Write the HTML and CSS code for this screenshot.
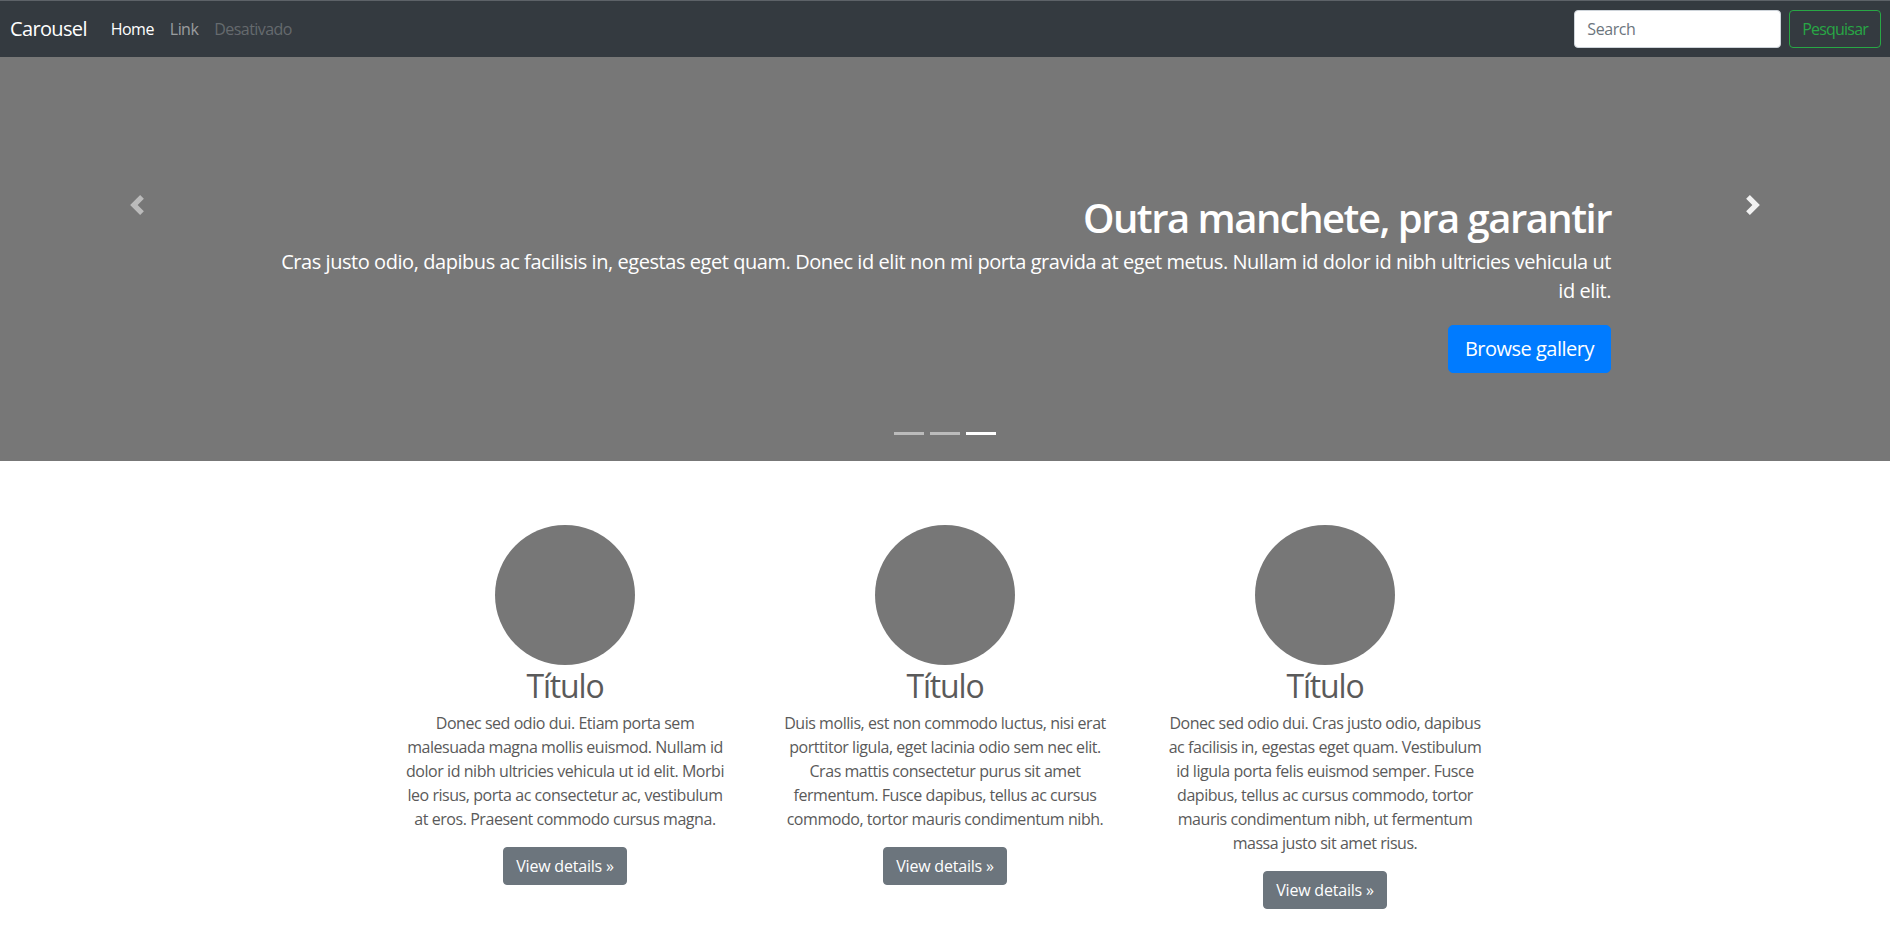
FILE: index.html
```html
<!DOCTYPE html>
<html lang="pt-BR">
<head>
<meta charset="utf-8">
<title>Carousel</title>
<link rel="stylesheet" href="styles.css">
</head>
<body>
<header class="navbar">
  <a class="brand" href="#">Carousel</a>
  <ul class="nav">
    <li class="active"><a href="#">Home</a></li>
    <li><a href="#">Link</a></li>
    <li class="disabled"><a href="#">Desativado</a></li>
  </ul>
  <form class="search">
    <input type="text" placeholder="Search">
    <button type="button" class="btn-outline">Pesquisar</button>
  </form>
</header>

<section class="carousel">
  <a class="control prev" href="#">
    <svg width="20" height="20" viewBox="0 0 8 8" fill="#fff"><path d="M5.25 0l-4 4 4 4 1.5-1.5L4.25 4l2.5-2.5L5.25 0z"/></svg>
  </a>
  <div class="caption">
    <h1>Outra manchete, pra garantir</h1>
    <p>Cras justo odio, dapibus ac facilisis in, egestas eget quam. Donec id elit non mi porta gravida at eget metus. Nullam id dolor id nibh ultricies vehicula ut id elit.</p>
    <div class="actions"><a class="btn-lg" href="#">Browse gallery</a></div>
  </div>
  <a class="control next" href="#">
    <svg width="20" height="20" viewBox="0 0 8 8" fill="#fff"><path d="M2.75 0l-1.5 1.5L3.75 4l-2.5 2.5L2.75 8l4-4-4-4z"/></svg>
  </a>
  <ol class="indicators">
    <li></li>
    <li></li>
    <li class="active"></li>
  </ol>
</section>

<main class="marketing">
  <div class="feature">
    <div class="circle"></div>
    <h2>Título</h2>
    <p>Donec sed odio dui. Etiam porta sem malesuada magna mollis euismod. Nullam id dolor id nibh ultricies vehicula ut id elit. Morbi leo risus, porta ac consectetur ac, vestibulum at eros. Praesent commodo cursus magna.</p>
    <a class="btn-secondary" href="#">View details »</a>
  </div>
  <div class="feature">
    <div class="circle"></div>
    <h2>Título</h2>
    <p>Duis mollis, est non commodo luctus, nisi erat porttitor ligula, eget lacinia odio sem nec elit. Cras mattis consectetur purus sit amet fermentum. Fusce dapibus, tellus ac cursus commodo, tortor mauris condimentum nibh.</p>
    <a class="btn-secondary" href="#">View details »</a>
  </div>
  <div class="feature">
    <div class="circle"></div>
    <h2>Título</h2>
    <p>Donec sed odio dui. Cras justo odio, dapibus ac facilisis in, egestas eget quam. Vestibulum id ligula porta felis euismod semper. Fusce dapibus, tellus ac cursus commodo, tortor mauris condimentum nibh, ut fermentum massa justo sit amet risus.</p>
    <a class="btn-secondary" href="#">View details »</a>
  </div>
</main>
</body>
</html>
```

FILE: styles.css
```css
* { box-sizing: border-box; }

body {
  margin: 0;
  font-family: "Open Sans", "Noto Sans", sans-serif;
  color: #5a5a5a;
  background: #fff;
}

a { text-decoration: none; }

/* navbar */
.navbar {
  display: flex;
  align-items: center;
  height: 57px;
  border-top: 1px solid #5d6268;
  background: #343a40;
  padding: 0 9px 0 10px;
}
.brand {
  font-size: 20px;
  line-height: 30px;
  letter-spacing: -0.65px;
  color: #fff;
  margin-right: 16px;
}
.nav {
  display: flex;
  flex: 1;
  list-style: none;
  margin: 0;
  padding: 0;
}
.nav a {
  display: block;
  padding: 8px;
  font-size: 16px;
  line-height: 24px;
  letter-spacing: -0.55px;
  color: rgba(255, 255, 255, .5);
}
.nav .active a { color: #fff; }
.nav .disabled a { color: rgba(255, 255, 255, .25); }

.search {
  display: flex;
  gap: 8px;
  margin: 0;
}
.search input {
  width: 207px;
  height: 38px;
  padding: 6px 12px;
  font-family: inherit;
  font-size: 16px;
  letter-spacing: -0.4px;
  color: #495057;
  background: #fff;
  border: 1px solid #ced4da;
  border-radius: 4px;
}
.search input::placeholder { color: #6c757d; }
.btn-outline {
  height: 38px;
  padding: 6px 12px;
  font-family: inherit;
  font-size: 16px;
  line-height: 24px;
  letter-spacing: -0.8px;
  color: #28a745;
  background: transparent;
  border: 1px solid #28a745;
  border-radius: 4px;
}

/* carousel */
.carousel {
  position: relative;
  height: 404px;
  background: #777;
}
.control {
  position: absolute;
  top: 0;
  width: 274px;
  height: 295px;
  display: flex;
  align-items: center;
  justify-content: center;
}
.control svg { display: block; }
.prev { left: 0; opacity: .5; }
.next { right: 0; opacity: .9; }

.caption {
  position: absolute;
  left: 268px;
  right: 279px;
  bottom: 48px;
  padding: 20px 0;
  text-align: right;
  color: #fff;
}
.caption h1 {
  margin: 0 0 5px;
  font-size: 40px;
  font-weight: 600;
  line-height: 48px;
  letter-spacing: -1.5px;
}
.caption p {
  margin: 0 0 20px;
  font-size: 20px;
  line-height: 29px;
  letter-spacing: -0.44px;
}
.caption .actions {
  display: flex;
  justify-content: flex-end;
  margin-bottom: 20px;
}
.btn-lg {
  display: block;
  padding: 8px 16px;
  font-size: 20px;
  line-height: 30px;
  letter-spacing: -0.5px;
  color: #fff;
  background: #007bff;
  border: 1px solid #007bff;
  border-radius: 5px;
}

.indicators {
  position: absolute;
  left: 0;
  right: 0;
  bottom: 26px;
  display: flex;
  justify-content: center;
  gap: 6px;
  margin: 0;
  padding: 0;
  list-style: none;
}
.indicators li {
  width: 30px;
  height: 3px;
  background: #fff;
  opacity: .5;
}
.indicators li.active { opacity: 1; }

/* marketing */
.marketing {
  width: 1140px;
  margin: 64px auto 0;
  display: grid;
  grid-template-columns: repeat(3, 1fr);
}
.feature {
  padding: 0 15px;
  text-align: center;
}
.circle {
  width: 140px;
  height: 140px;
  margin: 0 auto;
  border-radius: 50%;
  background: #777;
}
.feature h2 {
  margin: 2px 0 6px;
  font-size: 32px;
  font-weight: 400;
  line-height: 38px;
  letter-spacing: -1.2px;
}
.feature p {
  margin: 0 12px 16px;
  font-size: 16px;
  line-height: 24px;
  letter-spacing: -0.45px;
}
.btn-secondary {
  display: inline-block;
  padding: 6px 12px;
  font-size: 16px;
  line-height: 24px;
  letter-spacing: -0.2px;
  color: #fff;
  background: #6c757d;
  border: 1px solid #6c757d;
  border-radius: 4px;
}
```
